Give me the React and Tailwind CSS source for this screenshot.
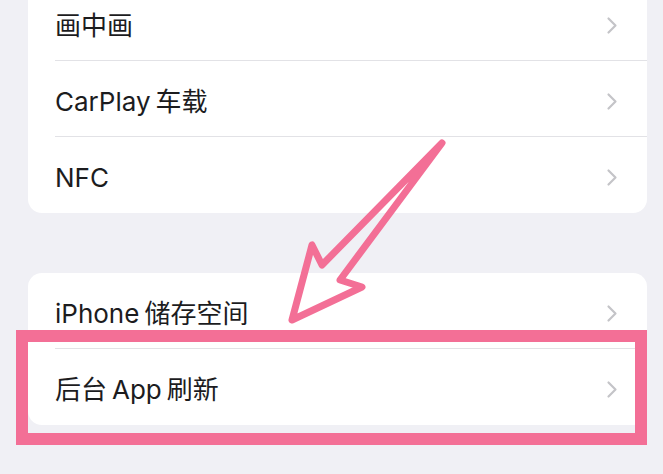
import React from "react";

// labels split into latin / CJK runs; iOS puts a small gap between them
const groups = [
  [["画中画"], ["CarPlay", "车载"], ["NFC"]],
  [["iPhone", "储存空间"], ["后台", "App", "刷新"]],
];

const Chevron = () => (
  <svg width="12" height="19" viewBox="0 0 12 19" fill="none">
    <path
      d="M2.5 2.5L9.5 9.5L2.5 16.5"
      stroke="#c4c4c8"
      strokeWidth="2.2"
      strokeLinecap="round"
      strokeLinejoin="round"
    />
  </svg>
);

const Row = ({ parts, last }) => (
  <div className="h-[76px] pl-[27px] flex">
    <div
      className={`flex-1 flex items-center justify-between pr-[29px] pt-[5px] ${
        last ? "" : "border-b border-[#e2e2e6]"
      }`}
    >
      <span className="flex gap-[5px] text-[26px] text-[#1c1c1e]">
        {parts.map((p) => (
          <span key={p}>{p}</span>
        ))}
      </span>
      <Chevron />
    </div>
  </div>
);

const App = () => {
  return (
    <div
      className="relative w-full h-[474px] overflow-hidden bg-[#f0f0f5]"
      style={{ fontFamily: 'Inter, "Noto Sans CJK SC", sans-serif' }}
    >
      <div className="flex flex-col gap-[60px] ml-[28px] mr-[16px] mt-[-15px]">
        {groups.map((rows, i) => (
          <div key={i} className="bg-white rounded-[14px]">
            {rows.map((parts, j) => (
              <Row key={j} parts={parts} last={j === rows.length - 1} />
            ))}
          </div>
        ))}
      </div>

      {/* annotation */}
      <div className="absolute left-[16px] top-[330px] w-[631px] h-[115px] border-[12px] border-[#f36f96]" />
      <svg className="absolute left-0 top-0" width="663" height="474" viewBox="0 0 663 474" fill="none">
        <polygon
          points="442,143 322,265 312,245 292,320 362,287 340,280"
          stroke="#f36f96"
          strokeWidth="7"
          strokeLinejoin="round"
          strokeLinecap="round"
        />
      </svg>
    </div>
  );
};

export default App;
